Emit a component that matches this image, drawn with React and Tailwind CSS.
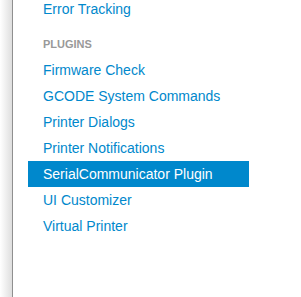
const items = [
  "Firmware Check",
  "GCODE System Commands",
  "Printer Dialogs",
  "Printer Notifications",
  "SerialCommunicator Plugin",
  "UI Customizer",
  "Virtual Printer",
];

const active = "SerialCommunicator Plugin";

export default function App() {
  return (
    <div className="flex h-[297px] w-[301px] overflow-hidden bg-white font-['Liberation_Sans',Arial,sans-serif]">
      <div className="w-[12px] shrink-0 bg-gradient-to-r from-white to-[#dedede]" />
      <div className="flex-1 border-l border-[#8f8f8f] pl-[15px]">
        <ul className="-mt-[4px] w-[221px] text-[14px] leading-[20px]">
          <li>
            <a className="block px-[15px] py-[3px] text-[#0088cc]">Error Tracking</a>
          </li>
          <li className="mt-[9px] px-[15px] py-[3px] text-[11px] font-bold uppercase text-[#999999]">
            Plugins
          </li>
          {items.map((label) => (
            <li key={label}>
              <a
                className={
                  label === active
                    ? "block bg-[#0088cc] px-[15px] py-[3px] text-white"
                    : "block px-[15px] py-[3px] text-[#0088cc]"
                }
              >
                {label}
              </a>
            </li>
          ))}
        </ul>
      </div>
    </div>
  );
}
